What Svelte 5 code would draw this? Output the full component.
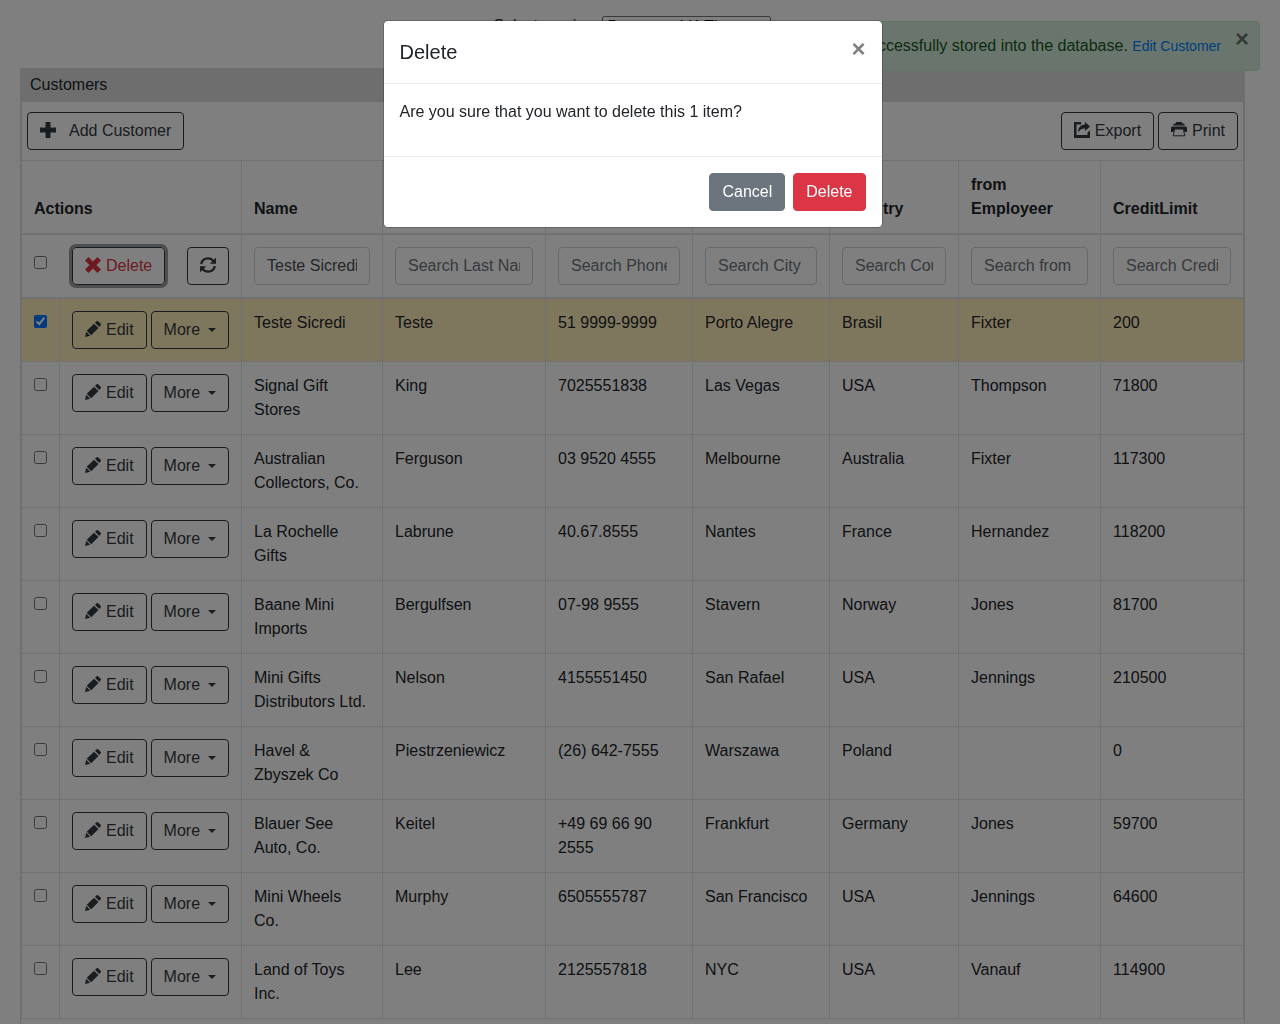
<script>
  const columns = [
    { title: 'Name', search: 'Search Name', value: 'Teste Sicredi' },
    { title: 'Last Name', search: 'Search Last Name', value: '' },
    { title: 'Phone', search: 'Search Phone', value: '' },
    { title: 'City', search: 'Search City', value: '' },
    { title: 'Country', search: 'Search Country', value: '' },
    { title: 'from Employeer', search: 'Search from Employeer', value: '' },
    { title: 'CreditLimit', search: 'Search CreditLimit', value: '' }
  ];

  const rows = [
    ['Teste Sicredi', 'Teste', '51 9999-9999', 'Porto Alegre', 'Brasil', 'Fixter', '200'],
    ['Signal Gift Stores', 'King', '7025551838', 'Las Vegas', 'USA', 'Thompson', '71800'],
    ['Australian Collectors, Co.', 'Ferguson', '03 9520 4555', 'Melbourne', 'Australia', 'Fixter', '117300'],
    ['La Rochelle Gifts', 'Labrune', '40.67.8555', 'Nantes', 'France', 'Hernandez', '118200'],
    ['Baane Mini Imports', 'Bergulfsen', '07-98 9555', 'Stavern', 'Norway', 'Jones', '81700'],
    ['Mini Gifts Distributors Ltd.', 'Nelson', '4155551450', 'San Rafael', 'USA', 'Jennings', '210500'],
    ['Havel & Zbyszek Co', 'Piestrzeniewicz', '(26) 642-7555', 'Warszawa', 'Poland', '', '0'],
    ['Blauer See Auto, Co.', 'Keitel', '+49 69 66 90 2555', 'Frankfurt', 'Germany', 'Jones', '59700'],
    ['Mini Wheels Co.', 'Murphy', '6505555787', 'San Francisco', 'USA', 'Jennings', '64600'],
    ['Land of Toys Inc.', 'Lee', '2125557818', 'NYC', 'USA', 'Vanauf', '114900']
  ];

  let selected = $state(rows.map((_, i) => i === 0));
</script>

<main class="page">
  <div class="theme">
    <label for="theme">Select version:</label>
    <select id="theme"><option>Bootstrap V4 Theme</option></select>
  </div>

  <section class="panel">
    <h1>Customers</h1>
    <div class="toolbar">
      <a class="btn" href="#add">
        <svg class="icon wide" viewBox="0 0 16 16" aria-hidden="true"><path d="M5.500 0h5v5.500H16v5h-5.500V16h-5v-5.500H0v-5h5.500z" /></svg>Add Customer
      </a>
      <div class="group">
        <button class="btn">
          <svg class="icon" viewBox="0 0 16 16" aria-hidden="true"><path d="M0 0h7v2.500H2.500v10.500h11v-2.500L16 8.500V16H0z" /><path d="M11 0l5 4.500-5 4.500V6.500C8 6.300 6 7.500 4 10.500c0-5 3-8 7-8z" /></svg>
          Export
        </button>
        <button class="btn">
          <svg class="icon" viewBox="0 0 16 16" aria-hidden="true"><path d="M5 0h6v1.500h2L14 3.500H2L3 1.500h2zM1 4.500h14l1 1V10h-2.500l-1-3h-9l-1 3H0V5.500z" /><path d="M3.700 7h8.600l1.500 6.800H2.200z" fill="none" stroke="currentColor" stroke-width="1" /></svg>
          Print
        </button>
      </div>
    </div>

    <table>
      <colgroup>
        <col class="c-check" /><col class="c-actions" /><col class="c-name" /><col class="c-last" /><col class="c-phone" />
        <col class="c-city" /><col class="c-country" /><col class="c-from" /><col class="c-credit" />
      </colgroup>
      <thead>
        <tr>
          <th colspan="2">Actions</th>
          {#each columns as c}<th>{c.title}</th>{/each}
        </tr>
        <tr class="filters">
          <td colspan="2">
            <div class="tools">
              <input type="checkbox" class="tick" aria-label="Select all" />
              <button class="btn danger focused">
                <svg class="icon" viewBox="0 0 16 16" aria-hidden="true"><path d="M3.500 0L8 4.500 12.500 0 16 3.500 11.500 8l4.500 4.500-3.500 3.500L8 11.500 3.500 16 0 12.500 4.500 8 0 3.500z" /></svg>
                Delete
              </button>
              <button class="btn refresh" aria-label="Refresh">
                <svg class="icon" viewBox="0 0 16 16" aria-hidden="true"><path d="M1.200 7C1.800 3.500 4.500 1.400 8 1.400c2.200 0 4 .8 5.400 2.600M14.800 9c-.6 3.500-3.300 5.600-6.800 5.600-2.200 0-4-.8-5.400-2.600" fill="none" stroke="currentColor" stroke-width="2.200" /><path d="M16 .8v6h-6.200zM0 15.200v-6h6.200z" /></svg>
              </button>
            </div>
          </td>
          {#each columns as c}
            <td><input class="field" type="text" placeholder={c.search} value={c.value} aria-label={c.search} /></td>
          {/each}
        </tr>
      </thead>
      <tbody>
        {#each rows as row, i}
          <tr class:selected={selected[i]}>
            <td><input type="checkbox" class="tick" bind:checked={selected[i]} aria-label={'Select ' + row[0]} /></td>
            <td>
              <div class="group">
                <a class="btn" href="#edit">
                  <svg class="icon" viewBox="0 0 16 16" aria-hidden="true"><path d="M1.700 9.700L9 2.700l4.500 4.300-7.300 7.300zM1.200 10.700l4 4L0 16zM10 1.800L11.700.3c.4-.4 1-.4 1.400 0l2.600 2.500c.4.4.4 1 0 1.400l-1.500 1.700z" /></svg>
                  Edit
                </a>
                <button class="btn more">More <span class="caret"></span></button>
              </div>
            </td>
            {#each row as cell}<td>{cell}</td>{/each}
          </tr>
        {/each}
      </tbody>
    </table>
    <footer class="pager"></footer>
  </section>
</main>

<div class="alert" role="status">
  <span>Your data has been successfully stored into the database. <a href="#edit">Edit Customer</a></span>
  <button class="close" aria-label="Dismiss">×</button>
</div>

<div class="backdrop">
  <div class="modal" role="dialog" aria-modal="true" aria-labelledby="modal-title">
    <header>
      <h2 id="modal-title">Delete</h2>
      <button class="close" aria-label="Close">×</button>
    </header>
    <div class="body"><p>Are you sure that you want to delete this 1 item?</p></div>
    <footer>
      <button class="btn solid-grey">Cancel</button>
      <button class="btn solid-red">Delete</button>
    </footer>
  </div>
</div>

<style>
  :global(body) {
    overflow: hidden;
    background: #fff;
    color: #212529;
    font: 16px/24px "Liberation Sans", Arial, sans-serif;
  }
  :global(*) { box-sizing: border-box; }

  .page { padding: 16px 35px 0 20px; }
  .theme { display: flex; justify-content: center; align-items: flex-start; gap: 4px; height: 52px; }
  .theme label { line-height: 20px; }
  .theme select {
    height: 20px;
    padding: 0;
    border: 1px solid #767676;
    border-radius: 2px;
    background: #fff;
    color: #000;
    font: inherit;
  }

  .panel { border: 1px solid #ddd; border-top: 0; }
  h1 {
    margin: 0;
    padding: 5px 9px;
    background: #ddd;
    font-size: 16px;
    font-weight: 400;
    line-height: 24px;
  }
  .toolbar {
    display: flex;
    justify-content: space-between;
    padding: 10px 5px;
    border: solid #ddd;
    border-width: 0 1px;
  }
  .group { display: flex; gap: 4px; }

  .btn {
    display: inline-flex;
    align-items: center;
    gap: 5px;
    height: 38px;
    padding: 0 12px;
    border: 1px solid #343a40;
    border-radius: 4px;
    background: transparent;
    color: #343a40;
    font: inherit;
    text-decoration: none;
    white-space: nowrap;
  }
  .icon { width: 16px; height: 16px; margin-bottom: 2px; fill: currentColor; flex: none; }
  .wide { margin-right: 8px; }
  .danger { color: #dc3545; }
  .focused { border-color: #343a40; box-shadow: 0 0 0 3px #999c9f; outline: 0; }
  .refresh { margin-left: auto; }
  .more { gap: 8px; }
  .caret { border: solid transparent; border-top-color: currentColor; border-width: 4px 4px 0; }

  table { width: 100%; table-layout: fixed; border-collapse: collapse; }
  .c-check { width: 38px; }
  .c-actions { width: 182px; }
  .c-name { width: 141px; }
  .c-last { width: 163px; }
  .c-phone { width: 147px; }
  .c-city { width: 137px; }
  .c-country { width: 129px; }
  .c-from { width: 142px; }
  .c-credit { width: 143px; }
  th, td { padding: 12px; border: 1px solid #dee2e6; text-align: left; vertical-align: top; }
  th { vertical-align: bottom; border-bottom-width: 2px; }
  .filters td { border-bottom-width: 2px; }
  .selected { background: #ffeeba; }
  .tools { display: flex; align-items: center; }
  .tick { display: block; width: 13px; height: 13px; margin: 4px 0 0; }
  .tools .tick { margin: 0 25px 8px 0; }
  .field {
    display: block;
    width: 100%;
    height: 38px;
    padding: 6px 12px;
    border: 1px solid #ced4da;
    border-radius: 4px;
    background: #fff;
    color: #495057;
    font: inherit;
  }
  .field::placeholder { color: #6c757d; opacity: 1; }
  .pager { padding: 12px; }

  .alert {
    position: fixed;
    top: 21px;
    right: 20px;
    padding: 12px 38px 12px 20px;
    border: 1px solid #c3e6cb;
    border-radius: 4px;
    background: #d4edda;
    color: #155724;
  }
  .alert a { color: #007bff; font-size: 14px; text-decoration: none; }
  .close {
    padding: 0;
    border: 0;
    background: transparent;
    color: #000;
    font: bold 24px/24px "Liberation Sans", Arial, sans-serif;
    opacity: 0.5;
  }
  .alert .close { position: absolute; top: 5px; right: 10px; }

  .backdrop {
    position: fixed;
    inset: 0;
    padding: 20px 15px 0 0;
    background: rgba(0, 0, 0, 0.5);
  }
  .modal {
    max-width: 500px;
    margin: 0 auto;
    border: 1px solid rgba(0, 0, 0, 0.2);
    border-radius: 5px;
    background: #fff;
    background-clip: padding-box;
  }
  .modal header {
    display: flex;
    justify-content: space-between;
    align-items: flex-start;
    padding: 16px;
    border-bottom: 1px solid #e9ecef;
  }
  h2 { margin: 0; font-size: 20px; font-weight: 400; line-height: 30px; }
  .body { padding: 16px; }
  .body p { margin: 0 0 16px; }
  .modal footer {
    display: flex;
    justify-content: flex-end;
    gap: 8px;
    padding: 16px;
    border-top: 1px solid #e9ecef;
  }
  .solid-grey { border-color: #6c757d; background: #6c757d; color: #fff; }
  .solid-red { border-color: #dc3545; background: #dc3545; color: #fff; }
</style>
